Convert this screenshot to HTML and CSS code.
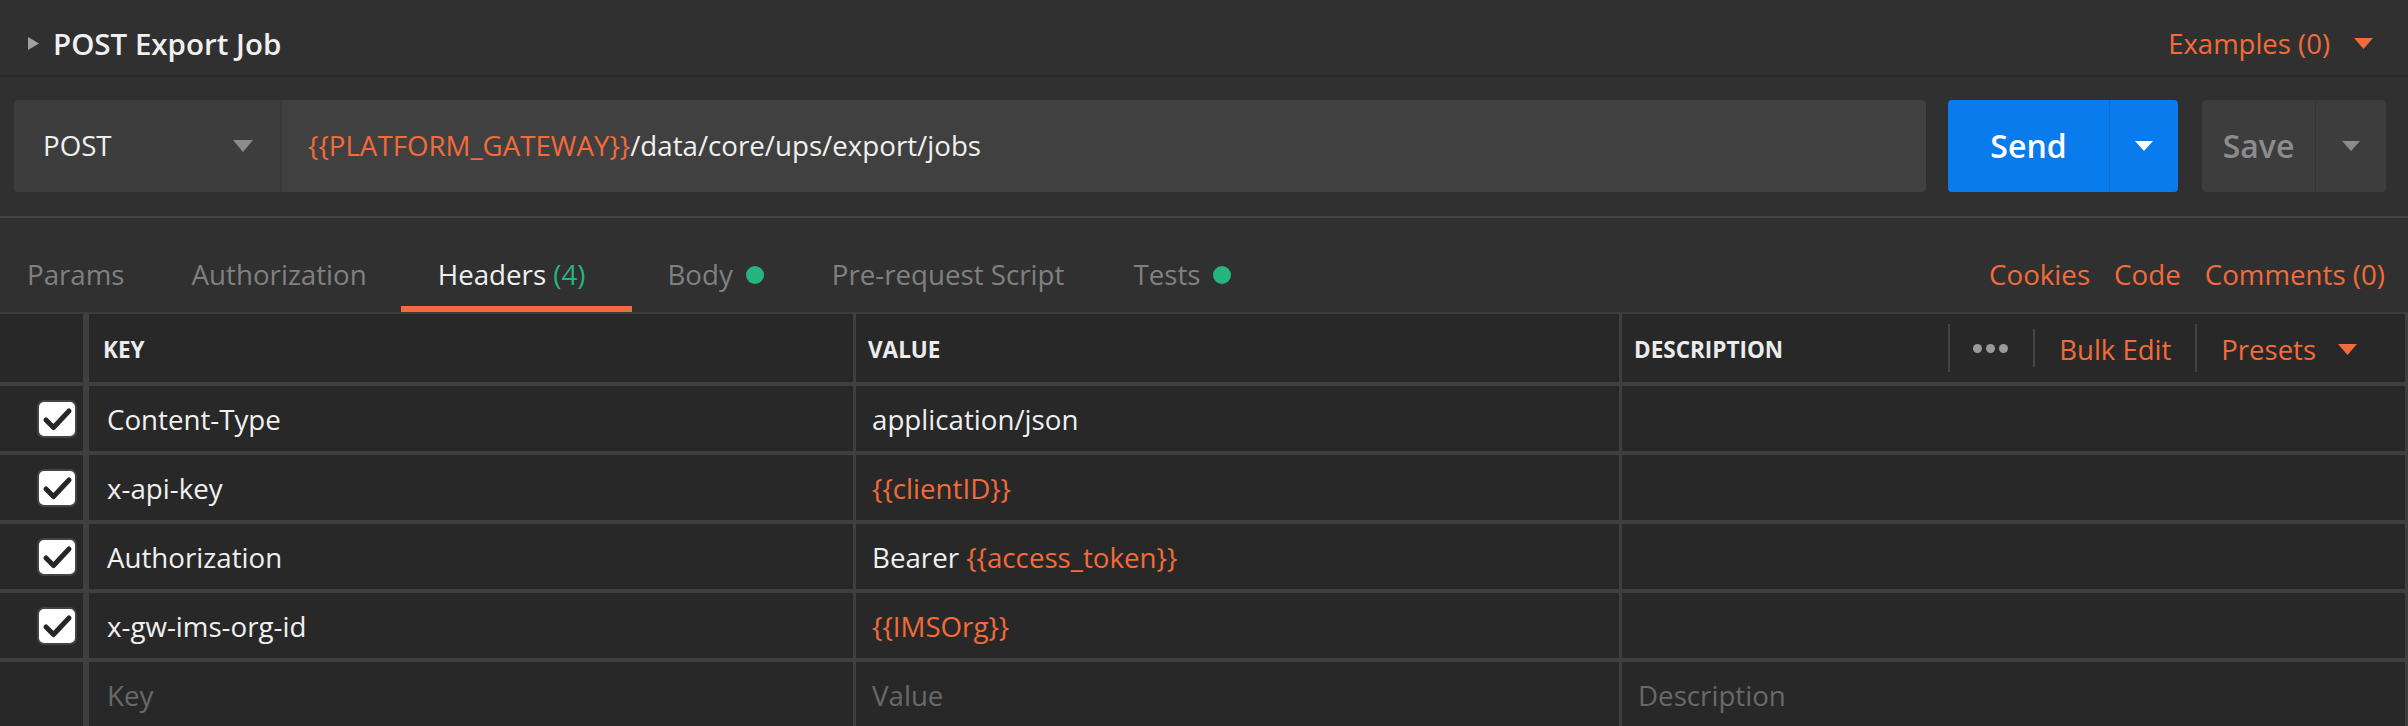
FILE: index.html
```html
<!DOCTYPE html>
<html lang="en">
<head>
<meta charset="utf-8">
<title>POST Export Job</title>
<link rel="stylesheet" href="styles.css">
</head>
<body>
<div class="app">
  <header class="title-bar">
    <svg class="title-caret" width="11" height="13" viewBox="0 0 11 13"><path d="M0 0 L11 6.5 L0 13 Z" fill="#a0a0a0"/></svg>
    <h1 class="title">POST Export Job</h1>
    <div class="examples"><span>Examples (0)</span><svg class="tri" width="19" height="11" viewBox="0 0 19 11"><path d="M0 0 H19 L9.5 11 Z" fill="#f26b3a"/></svg></div>
  </header>

  <div class="url-row">
    <div class="url-group">
      <div class="method">
        <span>POST</span>
        <svg width="20" height="12" viewBox="0 0 20 12"><path d="M0 0 H20 L10 12 Z" fill="#8c8c8c"/></svg>
      </div>
      <div class="url"><span class="var">{{PLATFORM_GATEWAY}}</span>/data/core/ups/export/jobs</div>
    </div>
    <div class="btn send">
      <div class="btn-main">Send</div>
      <div class="btn-drop"><svg width="18" height="10" viewBox="0 0 18 10"><path d="M0 0 H18 L9 10 Z" fill="#ffffff"/></svg></div>
    </div>
    <div class="btn save">
      <div class="btn-main">Save</div>
      <div class="btn-drop"><svg width="18" height="10" viewBox="0 0 18 10"><path d="M0 0 H18 L9 10 Z" fill="#8c8c8c"/></svg></div>
    </div>
  </div>

  <nav class="tabs">
    <div class="tab tab-params">Params</div>
    <div class="tab tab-auth">Authorization</div>
    <div class="tab active">Headers&nbsp;<span class="count">(4)</span></div>
    <div class="tab tab-body">Body<span class="dot"></span></div>
    <div class="tab tab-pre">Pre-request Script</div>
    <div class="tab">Tests<span class="dot"></span></div>
    <div class="tab-links">
      <span>Cookies</span>
      <span>Code</span>
      <span>Comments (0)</span>
    </div>
  </nav>

  <div class="table">
    <div class="row head">
      <div class="cell check"></div>
      <div class="cell key">KEY</div>
      <div class="cell">VALUE</div>
      <div class="cell desc">
        <span class="desc-label">DESCRIPTION</span>
        <div class="head-actions">
          <span class="sep"></span>
          <span class="dots"><i></i><i></i><i></i></span>
          <span class="sep short"></span>
          <span class="link">Bulk Edit</span>
          <span class="sep"></span>
          <span class="link presets"><span>Presets</span><svg width="19" height="11" viewBox="0 0 19 11"><path d="M0 0 H19 L9.5 11 Z" fill="#f26b3a"/></svg></span>
        </div>
      </div>
    </div>

    <div class="row">
      <div class="cell check"><svg class="cb" width="40" height="38" viewBox="0 0 40 38"><rect x="1" y="1" width="38" height="36" rx="6" fill="#ffffff" stroke="#444" stroke-width="2"/><path d="M9 20 L16.5 27.5 L32 11" fill="none" stroke="#262626" stroke-width="5" stroke-linecap="round" stroke-linejoin="round"/></svg></div>
      <div class="cell key">Content-Type</div>
      <div class="cell">application/json</div>
      <div class="cell"></div>
    </div>
    <div class="row">
      <div class="cell check"><svg class="cb" width="40" height="38" viewBox="0 0 40 38"><rect x="1" y="1" width="38" height="36" rx="6" fill="#ffffff" stroke="#444" stroke-width="2"/><path d="M9 20 L16.5 27.5 L32 11" fill="none" stroke="#262626" stroke-width="5" stroke-linecap="round" stroke-linejoin="round"/></svg></div>
      <div class="cell key">x-api-key</div>
      <div class="cell"><span class="var">{{clientID}}</span></div>
      <div class="cell"></div>
    </div>
    <div class="row">
      <div class="cell check"><svg class="cb" width="40" height="38" viewBox="0 0 40 38"><rect x="1" y="1" width="38" height="36" rx="6" fill="#ffffff" stroke="#444" stroke-width="2"/><path d="M9 20 L16.5 27.5 L32 11" fill="none" stroke="#262626" stroke-width="5" stroke-linecap="round" stroke-linejoin="round"/></svg></div>
      <div class="cell key">Authorization</div>
      <div class="cell">Bearer&nbsp;<span class="var">{{access_token}}</span></div>
      <div class="cell"></div>
    </div>
    <div class="row">
      <div class="cell check"><svg class="cb" width="40" height="38" viewBox="0 0 40 38"><rect x="1" y="1" width="38" height="36" rx="6" fill="#ffffff" stroke="#444" stroke-width="2"/><path d="M9 20 L16.5 27.5 L32 11" fill="none" stroke="#262626" stroke-width="5" stroke-linecap="round" stroke-linejoin="round"/></svg></div>
      <div class="cell key">x-gw-ims-org-id</div>
      <div class="cell"><span class="var">{{IMSOrg}}</span></div>
      <div class="cell"></div>
    </div>
    <div class="row">
      <div class="cell check"></div>
      <div class="cell key placeholder">Key</div>
      <div class="cell placeholder">Value</div>
      <div class="cell placeholder">Description</div>
    </div>
  </div>
</div>
</body>
</html>
```

FILE: styles.css
```css
* { box-sizing: border-box; }

html, body {
  margin: 0;
  background: #303030;
}

body {
  font-family: "Open Sans", "Noto Sans", sans-serif;
  font-size: 27.7px;
  color: #f0f0f0;
  line-height: 1;
  overflow: hidden;
}

.var { color: #f26b3a; }

/* title */
.title-bar {
  height: 77px;
  border-bottom: 2px solid #272727;
  display: flex;
  align-items: center;
  padding: 12px 35px 0 28px;
}
.title-caret { margin-right: 14px; flex: none; }
.title {
  flex: 1;
  margin: 0;
  font-size: 29.5px;
  font-weight: 600;
  line-height: 1;
}
.examples {
  color: #f26b3a;
  font-size: 27.5px;
  display: flex;
  align-items: center;
  gap: 24px;
}

/* url row */
.url-row {
  display: flex;
  padding: 23px 22px 24px 14px;
  border-bottom: 2px solid #444444;
}
.url-group {
  flex: 1;
  display: flex;
  height: 92px;
  border-radius: 4px;
  overflow: hidden;
  background: #404040;
  margin-right: 22px;
}
.method {
  width: 268px;
  flex: none;
  background: #3d3d3d;
  border-right: 2px solid #383838;
  display: flex;
  align-items: center;
  justify-content: space-between;
  padding: 0 27px 0 29px;
}
.url {
  display: flex;
  align-items: center;
  padding-left: 26px;
  white-space: nowrap;
}

.btn {
  display: flex;
  height: 92px;
  border-radius: 4px;
  overflow: hidden;
  font-size: 32px;
  font-weight: 600;
}
.btn-main, .btn-drop {
  display: flex;
  align-items: center;
  justify-content: center;
}
.send {
  width: 230px;
  background: #097bed;
  color: #ffffff;
  margin-right: 24px;
}
.send .btn-main { width: 161px; }
.send .btn-drop { flex: 1; border-left: 1px solid #0a6cd2; }
.save {
  width: 184px;
  background: #3d3d3d;
  color: #8c8c8c;
}
.save .btn-main { width: 113px; }
.save .btn-drop { flex: 1; border-left: 1px solid #353535; }

/* tabs */
.tabs {
  height: 96px;
  display: flex;
  border-bottom: 2px solid #3c3c3c;
  padding: 0 23px 0 27px;
}
.tab {
  position: relative;
  display: flex;
  align-items: center;
  padding-top: 19px;
  margin-right: 70px;
  color: #808080;
  white-space: nowrap;
}
.tab.tab-params { margin-right: 67px; }
.tab.tab-auth { margin-right: 71px; }
.tab.tab-body { margin-right: 68px; }
.tab.tab-pre { margin-right: 69px; }
.tab.active {
  color: #f0f0f0;
  margin-right: 82px;
}
.tab.active::after {
  content: "";
  position: absolute;
  left: -37px;
  right: -47px;
  bottom: 0;
  height: 6px;
  background: #f26b3a;
}
.count { color: #26b47f; }
.dot {
  width: 18px;
  height: 18px;
  border-radius: 50%;
  background: #26b47f;
  margin-left: 13px;
}
.tab-links {
  margin-left: auto;
  display: flex;
  align-items: center;
  gap: 24px;
  padding-top: 19px;
  color: #f26b3a;
}

/* table */
.table {
  background: #282828;
  border-right: 3px solid #3f3f3f;
}
.row {
  display: grid;
  grid-template-columns: 83px 770px 766px 1fr;
  height: 69px;
  border-top: 4px solid #3f3f3f;
}
.row.head {
  height: 68px;
  border-top: none;
  font-size: 22.5px;
  font-weight: 700;
  color: #ececec;
}
.cell {
  display: flex;
  align-items: center;
  padding-left: 16px;
  padding-top: 2px;
  border-left: 3px solid #3f3f3f;
  white-space: nowrap;
}
.cell.key {
  border-left-width: 6px;
  padding-left: 18px;
}
.cell.check {
  border-left: none;
  justify-content: flex-end;
  padding: 1px 6px 0 0;
}
.row.head .cell { padding-left: 12px; padding-top: 5px; }
.row.head .cell.key { padding-left: 14px; }
.row.head .cell.check { padding: 0; }
.row.head .cell.desc { padding-top: 0; }
.desc-label { padding-top: 5px; }

.desc { justify-content: space-between; }
.head-actions {
  display: flex;
  align-items: center;
  height: 100%;
  padding-right: 48px;
  font-size: 27.5px;
  font-weight: 400;
  color: #f26b3a;
}
.sep {
  width: 2px;
  height: 48px;
  background: #444444;
}
.sep.short { height: 38px; }
.dots {
  display: flex;
  gap: 4px;
  margin: 0 25px 0 23px;
}
.dots i {
  width: 9px;
  height: 9px;
  border-radius: 50%;
  background: #9a9a9a;
}
.link { margin: 0 24px 0 24px; padding-top: 3px; }
.presets {
  display: flex;
  align-items: center;
  gap: 22px;
  margin-right: 0;
}
.placeholder { color: #686868; }
```
